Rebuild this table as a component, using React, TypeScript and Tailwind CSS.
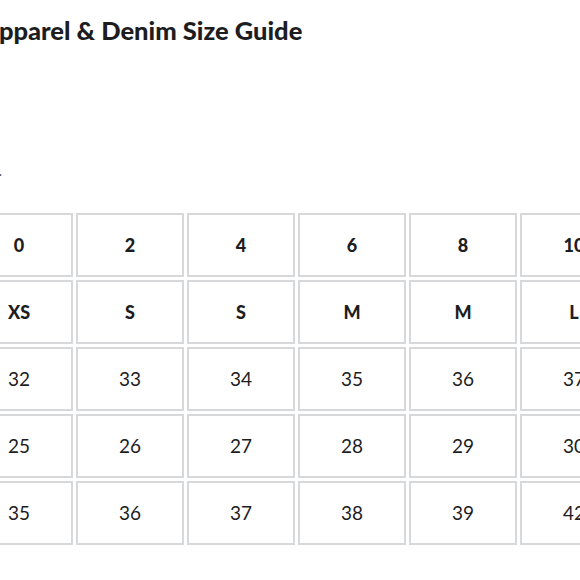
const headerRows = [
  ["0", "2", "4", "6", "8", "10", "12"],
  ["XS", "S", "S", "M", "M", "L", "L"],
];

const bodyRows = [
  ["32", "33", "34", "35", "36", "37", "38"],
  ["25", "26", "27", "28", "29", "30", "31"],
  ["35", "36", "37", "38", "39", "42", "43"],
];

export default function App() {
  return (
    <div className="h-[580px] w-[580px] overflow-hidden bg-white font-['Lato',sans-serif] text-[#1d1d1f]">
      <div className="-ml-[38px]">
        <h1 className="pl-[19px] pt-[14px] text-[25.5px] font-black leading-[32px]">
          Apparel &amp; Denim Size Guide
        </h1>
        <div className="mt-[115px] flex">
          <div className="w-[40px] text-right text-[15px] leading-[18px] text-[#555]">.</div>
        </div>
        <table className="mt-[31px] border-separate border-spacing-[3px]">
          <tbody>
            {headerRows.map((row, i) => (
              <tr key={"h" + i}>
                {row.map((v, j) => (
                  <td
                    key={j}
                    className="h-[64px] w-[108px] min-w-[108px] border-2 border-[#d6d8da] text-center text-[18px] font-black"
                  >
                    {v}
                  </td>
                ))}
              </tr>
            ))}
            {bodyRows.map((row, i) => (
              <tr key={"b" + i}>
                {row.map((v, j) => (
                  <td
                    key={j}
                    className="h-[64px] w-[108px] min-w-[108px] border-2 border-[#d6d8da] text-center text-[19px]"
                  >
                    {v}
                  </td>
                ))}
              </tr>
            ))}
          </tbody>
        </table>
      </div>
    </div>
  );
}
